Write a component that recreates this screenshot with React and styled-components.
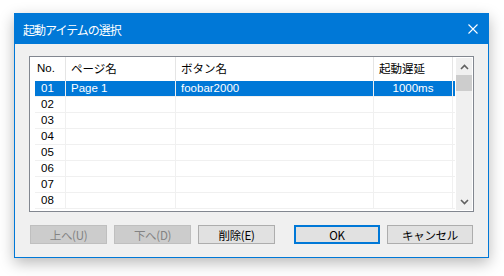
import React from 'react';
import styled, { createGlobalStyle } from 'styled-components';

const GlobalStyle = createGlobalStyle`
    html, body {
        margin: 0;
        padding: 0;
        background: #ffffff;
    }
    body {
        font-family: "Liberation Sans", "Noto Sans CJK JP", sans-serif;
        font-size: 12px;
        color: #000000;
    }
`;

const Page = styled.div`
    width: 504px;
    height: 276px;
    padding: 13px 0 0 14px;
    box-sizing: border-box;
`;

const Window = styled.div`
    width: 475px;
    height: 245px;
    box-sizing: border-box;
    border: 1px solid #0078d7;
    background: #f0f0f0;
    box-shadow: 0 5px 14px rgba(0, 0, 0, 0.28);
    display: flex;
    flex-direction: column;
`;

const TitleBar = styled.div`
    height: 30px;
    background: #0078d7;
    display: flex;
    align-items: center;
    justify-content: space-between;
    padding: 0 10px 0 8px;
    flex-shrink: 0;
`;

const Title = styled.span`
    color: #ffffff;
    font-family: "Noto Sans CJK JP", sans-serif;
    font-size: 12px;
    letter-spacing: -1px;
`;

const CloseBtn = styled.div`
    width: 10px;
    height: 10px;
    display: flex;
`;

const Body = styled.div`
    padding: 12px 14px 0 14px;
    display: flex;
    flex-direction: column;
`;

const ListBox = styled.div`
    width: 445px;
    height: 156px;
    box-sizing: border-box;
    border: 1px solid #828790;
    background: #ffffff;
    display: flex;
    padding: 1px 1px 1px 0;
`;

const Table = styled.div`
    flex: 1;
    padding-left: 5px;
    display: flex;
    flex-direction: column;
    margin-top: -1px;
`;

const Row = styled.div`
    display: grid;
    grid-template-columns: 31px 110px 198px 79px;
    height: ${p => (p.$head ? '24px' : '16px')};
    background: ${p => (p.$selected ? '#0078d7' : 'transparent')};
    color: ${p => (p.$selected ? '#ffffff' : '#000000')};
    box-shadow: ${p => (p.$head ? 'none' : 'inset 0 -1px 0 #f0f0f0')};
`;

const Cell = styled.div`
    display: flex;
    align-items: center;
    justify-content: ${p => (p.$center ? 'center' : 'flex-start')};
    padding-left: ${p => (p.$center ? '0' : p.$pad || '5px')};
    border-right: 1px solid ${p => (p.$head ? '#e5e5e5' : '#f0f0f0')};
    font-family: ${p => (p.$cjk ? '"Noto Sans CJK JP", sans-serif' : '"Liberation Sans", "Noto Sans CJK JP", sans-serif')};
    font-size: ${p => (p.$cjk ? '11.5px' : '11.5px')};
    white-space: nowrap;
    overflow: hidden;
    line-height: 1;
`;

const ScrollBar = styled.div`
    width: 16px;
    background: #f0f0f0;
    display: flex;
    flex-direction: column;
    align-items: center;
    margin-left: 1px;
`;

const ArrowBox = styled.div`
    height: 17px;
    width: 16px;
    display: flex;
    align-items: center;
    justify-content: center;
`;

const Thumb = styled.div`
    width: 16px;
    height: 16px;
    background: #cdcdcd;
`;

const Track = styled.div`
    flex: 1;
`;

const ButtonRow = styled.div`
    display: flex;
    margin-top: 13px;
    margin-left: 1px;
    gap: 7px;
`;

const Button = styled.div`
    width: ${p => (p.$wide ? '86px' : '77px')};
    height: 19px;
    box-sizing: border-box;
    display: flex;
    align-items: center;
    justify-content: center;
    font-family: "Noto Sans CJK JP", sans-serif;
    font-size: 11.5px;
    letter-spacing: -0.3px;
    background: ${p => (p.$disabled ? '#cccccc' : '#e1e1e1')};
    color: ${p => (p.$disabled ? '#838383' : '#000000')};
    border: ${p => (p.$default ? '2px solid #0078d7' : p.$disabled ? '1px solid #bfbfbf' : '1px solid #adadad')};
    margin-left: ${p => p.$push || '0'};
`;

const rows = [
    { no: '01', page: 'Page 1', button: 'foobar2000', delay: '1000ms', selected: true },
    { no: '02' }, { no: '03' }, { no: '04' }, { no: '05' }, { no: '06' }, { no: '07' }, { no: '08' }
];

const Chevron = ({ down }) => (
    <svg width="9" height="6" viewBox="0 0 9 6">
        <path
            d={down ? 'M1 1 L4.5 4.5 L8 1' : 'M1 5 L4.5 1.5 L8 5'}
            fill="none"
            stroke="#606060"
            strokeWidth="1.6"
        />
    </svg>
);

export default function App() {
    return (
        <Page>
            <GlobalStyle />
            <Window>
                <TitleBar>
                    <Title>起動アイテムの選択</Title>
                    <CloseBtn>
                        <svg width="10" height="10" viewBox="0 0 10 10">
                            <path d="M0.5 0.5 L9.5 9.5 M9.5 0.5 L0.5 9.5" stroke="#ffffff" strokeWidth="1.1" />
                        </svg>
                    </CloseBtn>
                </TitleBar>
                <Body>
                    <ListBox>
                        <Table>
                            <Row $head>
                                <Cell $head $pad="2px">No.</Cell>
                                <Cell $head $cjk>ページ名</Cell>
                                <Cell $head $cjk>ボタン名</Cell>
                                <Cell $head $cjk>起動遅延</Cell>
                            </Row>
                            {rows.map(r => (
                                <Row key={r.no} $selected={r.selected}>
                                    <Cell $pad="6px">{r.no}</Cell>
                                    <Cell>{r.page}</Cell>
                                    <Cell>{r.button}</Cell>
                                    <Cell $center>{r.delay}</Cell>
                                </Row>
                            ))}
                        </Table>
                        <ScrollBar>
                            <ArrowBox><Chevron /></ArrowBox>
                            <Thumb />
                            <Track />
                            <ArrowBox><Chevron down /></ArrowBox>
                        </ScrollBar>
                    </ListBox>
                    <ButtonRow>
                        <Button $disabled>上へ(U)</Button>
                        <Button $disabled>下へ(D)</Button>
                        <Button>削除(E)</Button>
                        <Button $wide $default $push="12px">OK</Button>
                        <Button $wide>キャンセル</Button>
                    </ButtonRow>
                </Body>
            </Window>
        </Page>
    );
}
